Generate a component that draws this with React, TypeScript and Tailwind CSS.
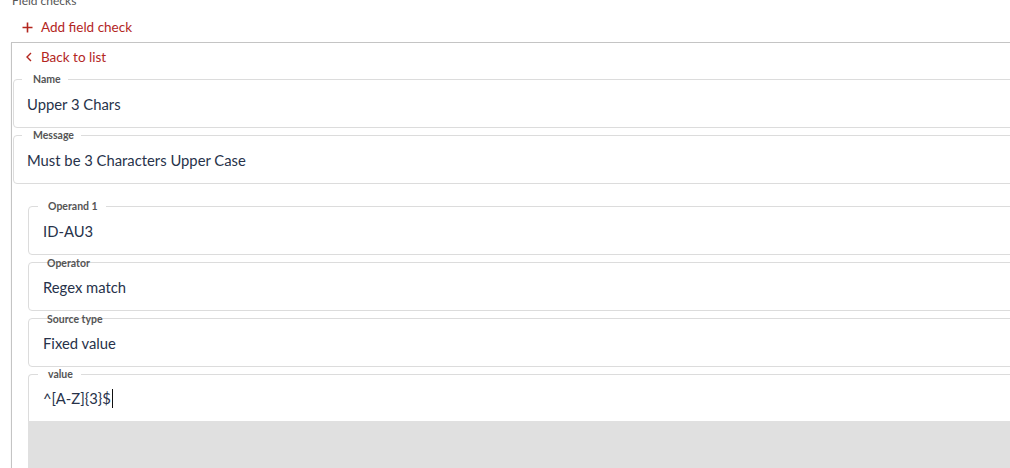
import React from 'react';

type FieldProps = {
  label: string;
  value: string;
  struck?: boolean;
  inset?: 'outer' | 'inner';
};

const Field: React.FC<FieldProps> = ({ label, value, struck, inset = 'outer' }) => {
  const outer = inset === 'outer';
  return (
    <div className={`relative h-[49px] rounded-[4px] border border-[#dcdcdc] flex items-center ${outer ? 'pl-[13px]' : 'pl-[14px]'}`}>
      <span
        className={`absolute text-[10.5px] font-bold leading-[12px] text-[#555] ${
          struck ? '-top-[6px] left-[17px] px-[1px]' : outer ? '-top-[7px] left-[8px] bg-white pl-[11px] pr-[7px]' : '-top-[7px] left-[9px] bg-white pl-[10px] pr-[8px]'
        }`}
      >
        {label}
      </span>
      <span className="text-[14.8px] text-[#27324a] leading-5">{value}</span>
    </div>
  );
};

export default function App() {
  return (
    <div className="w-[1010px] h-[468px] overflow-hidden bg-white font-['Lato','Noto_Sans',sans-serif]">
      <div className="w-[1060px]">
        <div className="pl-[12px] -mt-[6px] h-[14px] text-[12px] leading-[14px] text-[#555]">Field checks</div>

        <button className="flex items-center gap-[8px] pl-[22px] h-[26px] mt-[6px] text-[13.5px] text-[#b3261e]">
          <svg width="11" height="11" viewBox="0 0 11 11" fill="none" stroke="currentColor" strokeWidth="1.6">
            <path d="M5.5 0.5v10M0.5 5.5h10" />
          </svg>
          Add field check
        </button>

        <div className="mt-[2px] ml-[11px] border-l border-t border-[#c4c4c4] shadow-[0_1px_1px_rgba(0,0,0,0.12)] pl-[1px] h-[430px]">
          <button className="flex items-center gap-[9px] pl-[13px] h-[28px] text-[13.5px] text-[#b3261e]">
            <svg width="6" height="10" viewBox="0 0 6 10" fill="none" stroke="currentColor" strokeWidth="1.4">
              <path d="M5 1 1 5l4 4" />
            </svg>
            Back to list
          </button>

          <div className="flex flex-col gap-[7px] mt-[8px]">
            <Field label="Name" value="Upper 3 Chars" />
            <Field label="Message" value="Must be 3 Characters Upper Case" />
          </div>

          <div className="pl-[15px] mt-[22px] flex flex-col gap-[7px]">
            <Field inset="inner" label="Operand 1" value="ID-AU3" />
            <Field inset="inner" label="Operator" value="Regex match" struck />
            <Field inset="inner" label="Source type" value="Fixed value" struck />
            <div>
              <div className="relative h-[47px] rounded-t-[4px] border border-b-0 border-[#dcdcdc] flex items-center pl-[14px]">
                <span className="absolute -top-[7px] left-[9px] bg-white pl-[10px] pr-[8px] text-[10.5px] font-bold leading-[12px] text-[#555]">
                  value
                </span>
                <span className="text-[14.8px] text-[#27324a] leading-5 flex items-center">
                  ^[A-Z]{'{3}'}$
                  <span className="inline-block w-px h-[19px] bg-[#111] ml-[1px]" />
                </span>
              </div>
              <div className="h-[60px] bg-[#e0e0e0]" />
            </div>
          </div>
        </div>
      </div>
    </div>
  );
}
